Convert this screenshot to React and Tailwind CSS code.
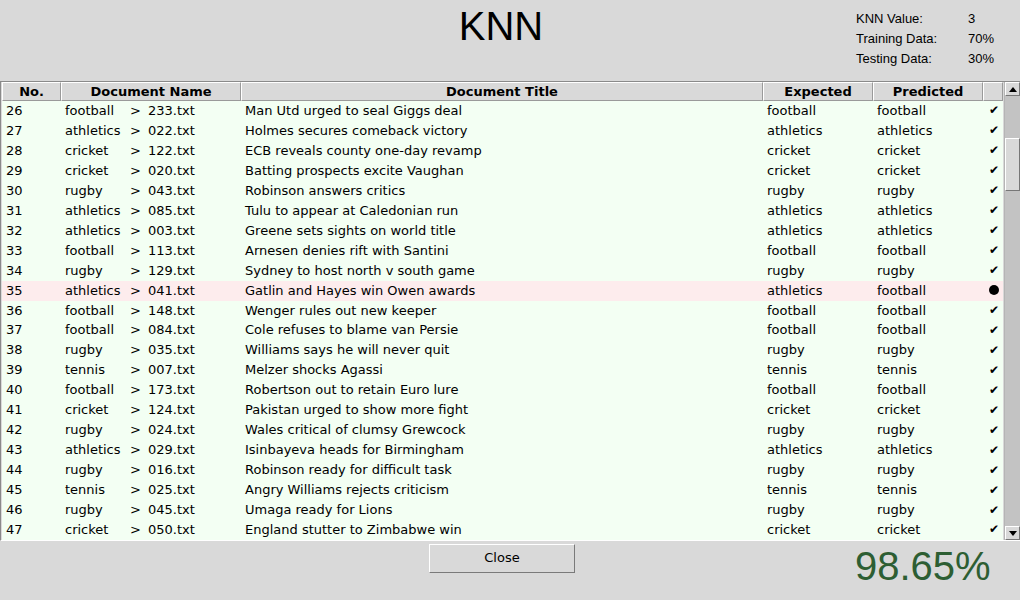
import React from 'react';

const rows = [
  [26, 'football', '233.txt', 'Man Utd urged to seal Giggs deal', 'football', 'football'],
  [27, 'athletics', '022.txt', 'Holmes secures comeback victory', 'athletics', 'athletics'],
  [28, 'cricket', '122.txt', 'ECB reveals county one-day revamp', 'cricket', 'cricket'],
  [29, 'cricket', '020.txt', 'Batting prospects excite Vaughan', 'cricket', 'cricket'],
  [30, 'rugby', '043.txt', 'Robinson answers critics', 'rugby', 'rugby'],
  [31, 'athletics', '085.txt', 'Tulu to appear at Caledonian run', 'athletics', 'athletics'],
  [32, 'athletics', '003.txt', 'Greene sets sights on world title', 'athletics', 'athletics'],
  [33, 'football', '113.txt', 'Arnesen denies rift with Santini', 'football', 'football'],
  [34, 'rugby', '129.txt', 'Sydney to host north v south game', 'rugby', 'rugby'],
  [35, 'athletics', '041.txt', 'Gatlin and Hayes win Owen awards', 'athletics', 'football'],
  [36, 'football', '148.txt', 'Wenger rules out new keeper', 'football', 'football'],
  [37, 'football', '084.txt', 'Cole refuses to blame van Persie', 'football', 'football'],
  [38, 'rugby', '035.txt', 'Williams says he will never quit', 'rugby', 'rugby'],
  [39, 'tennis', '007.txt', 'Melzer shocks Agassi', 'tennis', 'tennis'],
  [40, 'football', '173.txt', 'Robertson out to retain Euro lure', 'football', 'football'],
  [41, 'cricket', '124.txt', 'Pakistan urged to show more fight', 'cricket', 'cricket'],
  [42, 'rugby', '024.txt', 'Wales critical of clumsy Grewcock', 'rugby', 'rugby'],
  [43, 'athletics', '029.txt', 'Isinbayeva heads for Birmingham', 'athletics', 'athletics'],
  [44, 'rugby', '016.txt', 'Robinson ready for difficult task', 'rugby', 'rugby'],
  [45, 'tennis', '025.txt', 'Angry Williams rejects criticism', 'tennis', 'tennis'],
  [46, 'rugby', '045.txt', 'Umaga ready for Lions', 'rugby', 'rugby'],
  [47, 'cricket', '050.txt', 'England stutter to Zimbabwe win', 'cricket', 'cricket'],
];

const cols = 'grid grid-cols-[59px_180px_522px_110px_110px_20px]';

function Head({ children }) {
  return (
    <div className="h-[19px] flex items-center justify-center bg-[#d9d9d9] border-r border-b border-[#9a9a9a] border-t border-l border-t-white border-l-white font-bold text-[13px] leading-none">
      {children}
    </div>
  );
}

function Row({ r }) {
  const [no, cat, file, title, exp, pred] = r;
  const ok = exp === pred;
  return (
    <div className={`${cols} h-5 items-center text-[13px] leading-none pb-[1px] ${ok ? 'bg-[#f3fff3]' : 'bg-[#fdeced]'}`}>
      <div className="pl-[4px]">{no}</div>
      <div className="flex pl-[4px]">
        <span className="w-[65px]">{cat}</span>
        <span className="w-[18px]">&gt;</span>
        <span>{file}</span>
      </div>
      <div className="pl-[4px]">{title}</div>
      <div className="pl-[4px]">{exp}</div>
      <div className="pl-[4px]">{pred}</div>
      <div className="flex justify-center pl-[2px]">
        {ok ? <span className="text-[12px]">✔</span> : <span className="w-[10px] h-[10px] rounded-full bg-black" />}
      </div>
    </div>
  );
}

export default function App() {
  return (
    <div className="w-[1020px] h-[600px] bg-[#d9d9d9] text-black font-['DejaVu_Sans',sans-serif] flex flex-col overflow-hidden">
      <div className="h-[81px] relative flex justify-center">
        <h1 className="font-['Liberation_Sans',Arial,sans-serif] text-[40px] leading-none pt-[6px] mr-[18px]">KNN</h1>
        <div className="absolute left-[856px] top-[9px] font-['Liberation_Sans',Arial,sans-serif] text-[13px] leading-5 grid grid-cols-[112px_auto]">
          <span>KNN Value:</span><span>3</span>
          <span>Training Data:</span><span>70%</span>
          <span>Testing Data:</span><span>30%</span>
        </div>
      </div>

      <div className="flex h-[460px] border-t border-l border-[#8a8a8a] border-b border-b-white">
        <div className="flex flex-col pl-[1px]">
          <div className={cols}>
            <Head>No.</Head>
            <Head>Document Name</Head>
            <Head>Document Title</Head>
            <Head>Expected</Head>
            <Head>Predicted</Head>
            <Head></Head>
          </div>
          {rows.map((r) => <Row key={r[0]} r={r} />)}
        </div>
        <div className="ml-[1px] w-[16px] bg-[#c3c3c3] flex flex-col border-l border-[#b5b5b5]">
          <div className="h-[14px] bg-[#d9d9d9] border border-t-white border-l-white border-r-[#777] border-b-[#777] flex items-center justify-center">
            <svg width="8" height="5" viewBox="0 0 8 5"><path d="M0 5 L4 0 L8 5Z" fill="#000" /></svg>
          </div>
          <div className="h-[42px]" />
          <div className="h-[53px] bg-[#d9d9d9] border border-t-white border-l-white border-r-[#777] border-b-[#777]" />
          <div className="flex-1" />
          <div className="h-[14px] bg-[#d9d9d9] border border-t-white border-l-white border-r-[#777] border-b-[#777] flex items-center justify-center">
            <svg width="8" height="5" viewBox="0 0 8 5"><path d="M0 0 L8 0 L4 5Z" fill="#000" /></svg>
          </div>
        </div>
      </div>

      <div className="relative h-[58px] flex justify-center">
        <button className="mt-[3px] ml-[-16px] w-[146px] h-[29px] bg-[#d9d9d9] border border-t-white border-l-white border-r-[#7a7a7a] border-b-[#7a7a7a] text-[13px] pb-[1px]">
          Close
        </button>
        <div className="absolute left-[855px] top-[3px] font-['Liberation_Sans',Arial,sans-serif] text-[40px] leading-none pt-[2px] text-[#2d5e33]">
          98.65%
        </div>
      </div>
    </div>
  );
}
